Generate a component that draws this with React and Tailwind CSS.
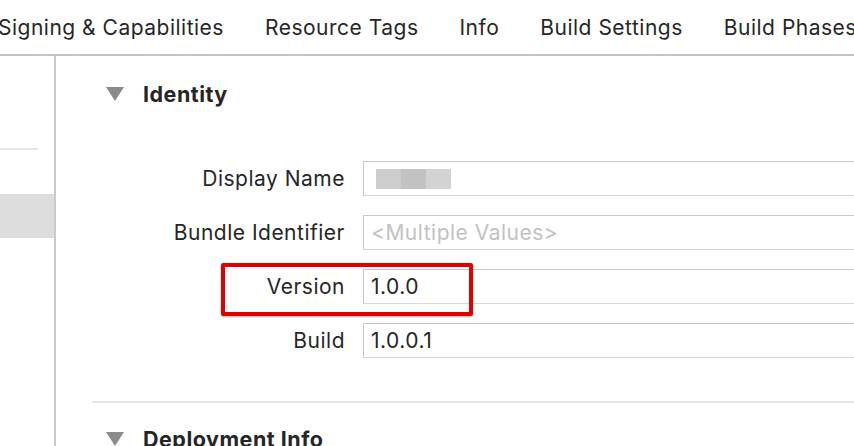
import React from "react";

const tabs = ["Signing & Capabilities", "Resource Tags", "Info", "Build Settings", "Build Phases"];

const Triangle = () => (
  <svg width="18" height="14" viewBox="0 0 18 14" className="shrink-0">
    <path d="M0 0 H18 L9 14 Z" fill="#8b8b8b" />
  </svg>
);

const Field = ({ label, children }) => (
  <div className="flex items-center h-[35px]">
    <div className="w-[307px] pr-[18px] text-right text-[21px] text-[#262626] whitespace-nowrap">{label}</div>
    <div className="flex-1 h-[35px] border border-r-0 border-[#c9c9c9] border-b-[#d9d9d9] flex items-center pl-[7px] text-[21px]">
      {children}
    </div>
  </div>
);

export default function App() {
  return (
    <div
      className="w-[854px] h-[446px] overflow-hidden bg-white flex flex-col tracking-[0.5px]"
      style={{ fontFamily: "Inter, 'Noto Sans', sans-serif" }}
    >
      {/* tab bar */}
      <div className="h-[56px] shrink-0 border-b-2 border-[#c3c3c3] flex items-center gap-[41px] ml-[-2px] pt-[1px] text-[21px] text-[#262626] whitespace-nowrap">
        {tabs.map((t) => (
          <span key={t}>{t}</span>
        ))}
      </div>

      <div className="flex flex-1">
        {/* sidebar */}
        <div className="w-[56px] shrink-0 border-r-2 border-[#c9c9c9] flex flex-col">
          <div className="h-[92px]" />
          <div className="h-[2px] w-[38px] bg-[#e6e6e6]" />
          <div className="h-[44px]" />
          <div className="h-[44px] bg-[#dcdcdc]" />
        </div>

        {/* content */}
        <div className="flex-1 pl-[36px] flex flex-col">
          <div className="flex items-center gap-[19px] pl-[14px] mt-[26px] h-[24px]">
            <Triangle />
            <span className="font-bold text-[21.5px] text-[#262626]">Identity</span>
          </div>

          <div className="relative mt-[55px] ml-[-36px] flex flex-col gap-[19px]">
            <Field label="Display Name">
              <div className="flex h-[20px] ml-[5px]">
                <div className="w-[25px] bg-[#cdcdcd]" />
                <div className="w-[25px] bg-[#c2c2c2]" />
                <div className="w-[25px] bg-[#d3d3d3]" />
              </div>
            </Field>
            <Field label="Bundle Identifier">
              <span className="text-[#c2c2c2]">&lt;Multiple Values&gt;</span>
            </Field>
            <Field label="Version">
              <span className="text-[#262626]">1.0.0</span>
            </Field>
            <Field label="Build">
              <span className="text-[#262626]">1.0.0.1</span>
            </Field>

            {/* annotation */}
            <div className="absolute left-[165px] top-[102px] w-[252px] h-[53px] border-4 border-[#e00000] rounded-[2px] shadow-[0_1px_2px_rgba(0,0,0,0.3)]" />
          </div>

          <div className="mt-[43px] h-[2px] bg-[#e6e6e6]" />

          <div className="flex items-center gap-[19px] pl-[14px] mt-[24px] h-[24px]">
            <Triangle />
            <span className="font-bold text-[21.5px] text-[#262626] whitespace-nowrap">Deployment Info</span>
          </div>
        </div>
      </div>
    </div>
  );
}
